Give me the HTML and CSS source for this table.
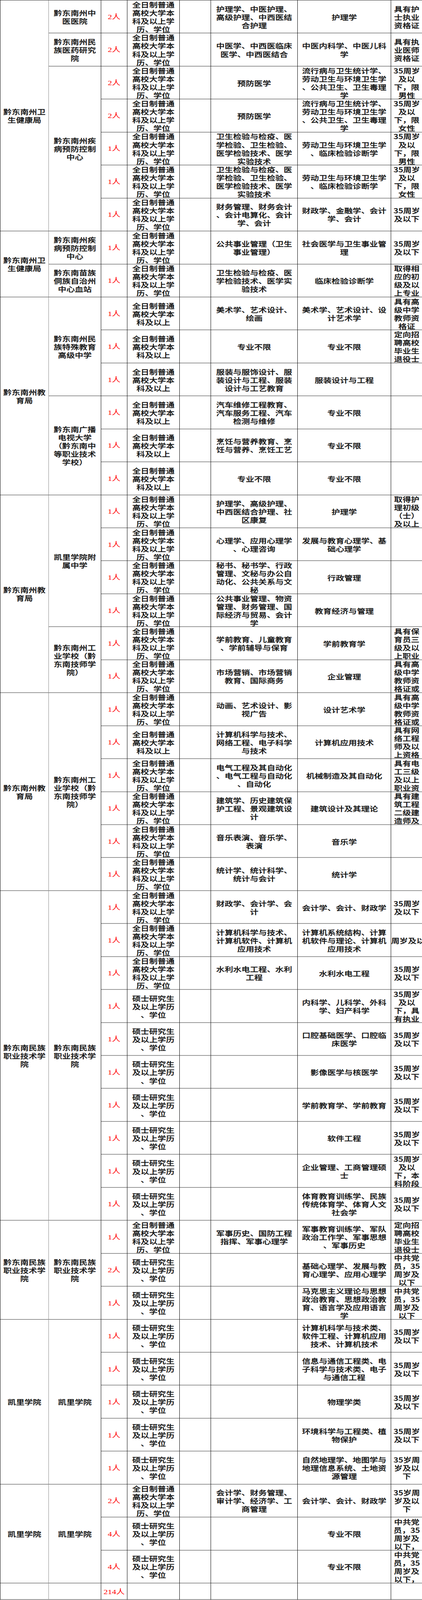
FILE: index.html
```html
<!DOCTYPE html>
<html lang="zh-CN">
<head>
<meta charset="utf-8">
<title>岗位表</title>
<link rel="stylesheet" href="styles.css">
</head>
<body>
<div class="page">
<div class="sheet">
<!-- rows 1-7 -->
<div class="c c1 s7">黔东南州卫<br>生健康局</div>
<div class="c">黔东南州中<br>医医院</div><div class="c n">2人</div><div class="c">全日制普通<br>高校大学本<br>科及以上学<br>历、学位</div><div class="c"></div><div class="c">护理学、中医护理、<br>高级护理、中西医结<br>合护理</div><div class="c">护理学</div><div class="c">具有护<br>士执业<br>资格证</div>
<div class="c">黔东南州民<br>族医药研究<br>院</div><div class="c n">2人</div><div class="c">全日制普通<br>高校大学本<br>科及以上学<br>历、学位</div><div class="c"></div><div class="c">中医学、中西医临床<br>医学、中西医结合</div><div class="c">中医内科学、中医儿科<br>学</div><div class="c">具有执<br>业医师<br>资格证</div>
<div class="c s5">黔东南州疾<br>病预防控制<br>中心</div><div class="c n">2人</div><div class="c">全日制普通<br>高校大学本<br>科及以上学<br>历、学位</div><div class="c"></div><div class="c">预防医学</div><div class="c">流行病与卫生统计学、<br>劳动卫生与环境卫生学<br>、公共卫生、卫生毒理<br>学</div><div class="c">35周岁<br>及以<br>下，限<br>男性</div>
<div class="c n">2人</div><div class="c">全日制普通<br>高校大学本<br>科及以上学<br>历、学位</div><div class="c"></div><div class="c">预防医学</div><div class="c">流行病与卫生统计学、<br>劳动卫生与环境卫生学<br>、公共卫生、卫生毒理<br>学</div><div class="c">35周岁<br>及以<br>下，限<br>女性</div>
<div class="c n">1人</div><div class="c">全日制普通<br>高校大学本<br>科及以上学<br>历、学位</div><div class="c"></div><div class="c">卫生检验与检疫、医<br>学检验、卫生检验、<br>医学检验技术、医学<br>实验技术</div><div class="c">劳动卫生与环境卫生学<br>、临床检验诊断学</div><div class="c">35周岁<br>及以<br>下，限<br>男性</div>
<div class="c n">1人</div><div class="c">全日制普通<br>高校大学本<br>科及以上学<br>历、学位</div><div class="c"></div><div class="c">卫生检验与检疫、医<br>学检验、卫生检验、<br>医学检验技术、医学<br>实验技术</div><div class="c">劳动卫生与环境卫生学<br>、临床检验诊断学</div><div class="c">35周岁<br>及以<br>下，限<br>女性</div>
<div class="c n">1人</div><div class="c">全日制普通<br>高校大学本<br>科及以上学<br>历、学位</div><div class="c"></div><div class="c">财务管理、财务会计<br>、会计电算化、会计<br>学、会计</div><div class="c">财政学、金融学、会计<br>学、会计</div><div class="c">35周岁<br>及以下</div>
<!-- rows 8-9 -->
<div class="c c1 s2">黔东南州卫<br>生健康局</div>
<div class="c">黔东南州疾<br>病预防控制<br>中心</div><div class="c n">1人</div><div class="c">全日制普通<br>高校大学本<br>科及以上学<br>历、学位</div><div class="c"></div><div class="c">公共事业管理（卫生<br>事业管理）</div><div class="c">社会医学与卫生事业管<br>理</div><div class="c">35周岁<br>及以下</div>
<div class="c">黔东南苗族<br>侗族自治州<br>中心血站</div><div class="c n">1人</div><div class="c">全日制普通<br>高校大学本<br>科及以上学<br>历、学位</div><div class="c"></div><div class="c">卫生检验与检疫、医<br>学检验技术、医学实<br>验技术</div><div class="c">临床检验诊断学</div><div class="c">取得相<br>应的初<br>级及以<br>上专业</div>
<!-- rows 10-15 -->
<div class="c c1 s6">黔东南州教<br>育局</div>
<div class="c s3">黔东南州民<br>族特殊教育<br>高级中学</div><div class="c n">1人</div><div class="c">全日制普通<br>高校大学本<br>科及以上</div><div class="c"></div><div class="c">美术学、艺术设计、<br>绘画</div><div class="c">美术学、艺术设计、设<br>计艺术学</div><div class="c">具有高<br>级中学<br>教师资<br>格证</div>
<div class="c n">1人</div><div class="c">全日制普通<br>高校大学本<br>科及以上</div><div class="c"></div><div class="c">专业不限</div><div class="c">专业不限</div><div class="c">定向招<br>聘高校<br>毕业生<br>退役士</div>
<div class="c n">1人</div><div class="c">全日制普通<br>高校大学本<br>科及以上</div><div class="c"></div><div class="c">服装与服饰设计、服<br>装设计与工程、服装<br>设计与工艺教育</div><div class="c">服装设计与工程</div><div class="c"></div>
<div class="c s3">黔东南广播<br>电视大学<br>（黔东南中<br>等职业技术<br>学校）</div><div class="c n">1人</div><div class="c">全日制普通<br>高校大学本<br>科及以上</div><div class="c"></div><div class="c">汽车维修工程教育、<br>汽车服务工程、汽车<br>检测与维修</div><div class="c">专业不限</div><div class="c"></div>
<div class="c n">1人</div><div class="c">全日制普通<br>高校大学本<br>科及以上</div><div class="c"></div><div class="c">烹饪与营养教育、烹<br>饪与营养、烹饪工艺</div><div class="c">专业不限</div><div class="c"></div>
<div class="c n">1人</div><div class="c">全日制普通<br>高校大学本<br>科及以上</div><div class="c"></div><div class="c">专业不限</div><div class="c">专业不限</div><div class="c"></div>
<!-- rows 16-21 -->
<div class="c c1 s6">黔东南州教<br>育局</div>
<div class="c s4">凯里学院附<br>属中学</div><div class="c n">1人</div><div class="c">全日制普通<br>高校大学本<br>科及以上学<br>历、学位</div><div class="c"></div><div class="c">护理学、高级护理、<br>中西医结合护理、社<br>区康复</div><div class="c">护理学</div><div class="c">取得护<br>理初级<br>（士）<br>及以上</div>
<div class="c n">1人</div><div class="c">全日制普通<br>高校大学本<br>科及以上学<br>历、学位</div><div class="c"></div><div class="c">心理学、应用心理学<br>、心理咨询</div><div class="c">发展与教育心理学、基<br>础心理学</div><div class="c"></div>
<div class="c n">1人</div><div class="c">全日制普通<br>高校大学本<br>科及以上学<br>历、学位</div><div class="c"></div><div class="c">秘书、秘书学、行政<br>管理、文秘与办公自<br>动化、公共关系与文<br>秘</div><div class="c">行政管理</div><div class="c"></div>
<div class="c n">1人</div><div class="c">全日制普通<br>高校大学本<br>科及以上学<br>历、学位</div><div class="c"></div><div class="c">公共事业管理、物资<br>管理、财务管理、国<br>际经济与贸易、会计<br>学</div><div class="c">教育经济与管理</div><div class="c"></div>
<div class="c s2">黔东南州工<br>业学校（黔<br>东南技师学<br>院）</div><div class="c n">1人</div><div class="c">全日制普通<br>高校大学本<br>科及以上学<br>历、学位</div><div class="c"></div><div class="c">学前教育、儿童教育<br>、学前辅导与保育</div><div class="c">学前教育学</div><div class="c">具有保<br>育员三<br>级及以<br>上职业</div>
<div class="c n">1人</div><div class="c">全日制普通<br>高校大学本<br>科及以上学<br>历、学位</div><div class="c"></div><div class="c">市场营销、市场营销<br>教育、国际商务</div><div class="c">企业管理</div><div class="c">具有高<br>级中学<br>教师资<br>格证或</div>
<!-- rows 22-27 -->
<div class="c c1 s6">黔东南州教<br>育局</div>
<div class="c s6">黔东南州工<br>业学校（黔<br>东南技师学<br>院）</div><div class="c n">1人</div><div class="c">全日制普通<br>高校大学本<br>科及以上学<br>历、学位</div><div class="c"></div><div class="c">动画、艺术设计、影<br>视广告</div><div class="c">设计艺术学</div><div class="c">具有高<br>级中学<br>教师资<br>格证或</div>
<div class="c n">1人</div><div class="c">全日制普通<br>高校大学本<br>科及以上</div><div class="c"></div><div class="c">计算机科学与技术、<br>网络工程、电子科学<br>与技术</div><div class="c">计算机应用技术</div><div class="c">具有网<br>络工程<br>师及以<br>上资格</div>
<div class="c n">1人</div><div class="c">全日制普通<br>高校大学本<br>科及以上学<br>历、学位</div><div class="c"></div><div class="c">电气工程及其自动化<br>、电气工程与自动化<br>、自动化</div><div class="c">机械制造及其自动化</div><div class="c">具有电<br>工三级<br>及以上<br>职业资</div>
<div class="c n">1人</div><div class="c">全日制普通<br>高校大学本<br>科及以上学<br>历、学位</div><div class="c"></div><div class="c">建筑学、历史建筑保<br>护工程、景观建筑设<br>计</div><div class="c">建筑设计及其理论</div><div class="c">具有建<br>筑工程<br>二级建<br>造师及</div>
<div class="c n">1人</div><div class="c">全日制普通<br>高校大学本<br>科及以上学<br>历、学位</div><div class="c"></div><div class="c">音乐表演、音乐学、<br>表演</div><div class="c">音乐学</div><div class="c"></div>
<div class="c n">1人</div><div class="c">全日制普通<br>高校大学本<br>科及以上学<br>历、学位</div><div class="c"></div><div class="c">统计学、统计科学、<br>统计与会计</div><div class="c">统计学</div><div class="c"></div>
<!-- rows 28-37 -->
<div class="c c1 s10">黔东南民族<br>职业技术学<br>院</div>
<div class="c s10">黔东南民族<br>职业技术学<br>院</div><div class="c n">1人</div><div class="c">全日制普通<br>高校大学本<br>科及以上学<br>历、学位</div><div class="c"></div><div class="c">财政学、会计学、会<br>计</div><div class="c">会计学、会计、财政学</div><div class="c">35周岁<br>及以下</div>
<div class="c n">1人</div><div class="c">全日制普通<br>高校大学本<br>科及以上学<br>历、学位</div><div class="c"></div><div class="c">计算机科学与技术、<br>计算机软件、计算机<br>应用技术</div><div class="c">计算机系统结构、计算<br>机软件与理论、计算机<br>应用技术</div><div class="c cl">周岁及以</div>
<div class="c n">1人</div><div class="c">全日制普通<br>高校大学本<br>科及以上学<br>历、学位</div><div class="c"></div><div class="c">水利水电工程、水利<br>工程</div><div class="c">水利水电工程</div><div class="c">35周岁<br>及以下</div>
<div class="c n">1人</div><div class="c">硕士研究生<br>及以上学历<br>、学位</div><div class="c"></div><div class="c"></div><div class="c">内科学、儿科学、外科<br>学、妇产科学</div><div class="c">35周岁<br>及以<br>下，具<br>有执业</div>
<div class="c n">1人</div><div class="c">硕士研究生<br>及以上学历<br>、学位</div><div class="c"></div><div class="c"></div><div class="c">口腔基础医学、口腔临<br>床医学</div><div class="c">35周岁<br>及以下</div>
<div class="c n">1人</div><div class="c">硕士研究生<br>及以上学历<br>、学位</div><div class="c"></div><div class="c"></div><div class="c">影像医学与核医学</div><div class="c">35周岁<br>及以下</div>
<div class="c n">1人</div><div class="c">硕士研究生<br>及以上学历<br>、学位</div><div class="c"></div><div class="c"></div><div class="c">学前教育学、学前教育</div><div class="c">35周岁<br>及以下</div>
<div class="c n">1人</div><div class="c">硕士研究生<br>及以上学历<br>、学位</div><div class="c"></div><div class="c"></div><div class="c">软件工程</div><div class="c">35周岁<br>及以下</div>
<div class="c n">1人</div><div class="c">硕士研究生<br>及以上学历<br>、学位</div><div class="c"></div><div class="c"></div><div class="c">企业管理、工商管理硕<br>士</div><div class="c">35周岁<br>及以<br>下，本<br>科阶段</div>
<div class="c n">1人</div><div class="c">硕士研究生<br>及以上学历<br>、学位</div><div class="c"></div><div class="c"></div><div class="c">体育教育训练学、民族<br>传统体育学、体育人文<br>社会学</div><div class="c">35周岁<br>及以下</div>
<!-- rows 38-40 -->
<div class="c c1 s3">黔东南民族<br>职业技术学<br>院</div>
<div class="c s3">黔东南民族<br>职业技术学<br>院</div><div class="c n">1人</div><div class="c">全日制普通<br>高校大学本<br>科及以上学<br>历、学位</div><div class="c"></div><div class="c">军事历史、国防工程<br>指挥、军事心理学</div><div class="c">军事教育训练学、军队<br>政治工作学、军事思想<br>、军事历史</div><div class="c">定向招<br>聘高校<br>毕业生<br>退役士</div>
<div class="c n">2人</div><div class="c">硕士研究生<br>及以上学历<br>、学位</div><div class="c"></div><div class="c"></div><div class="c">基础心理学、发展与教<br>育心理学、应用心理学</div><div class="c">中共党<br>员，35<br>周岁及<br>以下</div>
<div class="c n">1人</div><div class="c">硕士研究生<br>及以上学历<br>、学位</div><div class="c"></div><div class="c"></div><div class="c">马克思主义理论与思想<br>政治教育、思想政治教<br>育、语言学及应用语言<br>学</div><div class="c">中共党<br>员，35<br>周岁及<br>以下</div>
<!-- rows 41-45 -->
<div class="c c1 s5">凯里学院</div>
<div class="c s5">凯里学院</div><div class="c n">1人</div><div class="c">硕士研究生<br>及以上学历<br>、学位</div><div class="c"></div><div class="c"></div><div class="c">计算机科学与技术类、<br>软件工程、计算机应用<br>技术、计算机技术</div><div class="c">35周岁<br>及以下</div>
<div class="c n">1人</div><div class="c">硕士研究生<br>及以上学历<br>、学位</div><div class="c"></div><div class="c"></div><div class="c">信息与通信工程类、电<br>子科学与技术类、电子<br>与通信工程</div><div class="c">35周岁<br>及以下</div>
<div class="c n">1人</div><div class="c">硕士研究生<br>及以上学历<br>、学位</div><div class="c"></div><div class="c"></div><div class="c">物理学类</div><div class="c">35周岁<br>及以下</div>
<div class="c n">1人</div><div class="c">硕士研究生<br>及以上学历<br>、学位</div><div class="c"></div><div class="c"></div><div class="c">环境科学与工程类、植<br>物保护</div><div class="c">35周岁<br>及以下</div>
<div class="c n">1人</div><div class="c">硕士研究生<br>及以上学历<br>、学位</div><div class="c"></div><div class="c"></div><div class="c">自然地理学、地图学与<br>地理信息系统、土地资<br>源管理</div><div class="c">35岁周<br>岁及以<br>下</div>
<!-- rows 46-48 -->
<div class="c c1 s3">凯里学院</div>
<div class="c s3">凯里学院</div><div class="c n">2人</div><div class="c">全日制普通<br>高校大学本<br>科及以上学<br>历、学位</div><div class="c"></div><div class="c">会计学、财务管理、<br>审计学、经济学、工<br>商管理</div><div class="c">会计学、会计、财政学</div><div class="c">35岁周<br>岁及以<br>下</div>
<div class="c n">4人</div><div class="c">硕士研究生<br>及以上学历<br>、学位</div><div class="c"></div><div class="c"></div><div class="c">专业不限</div><div class="c">中共党<br>员，35<br>周岁及<br>以下，</div>
<div class="c n">4人</div><div class="c">硕士研究生<br>及以上学历<br>、学位</div><div class="c"></div><div class="c"></div><div class="c">专业不限</div><div class="c">中共党<br>员，35<br>周岁及<br>以下，</div>
<!-- total -->
<div class="c c1"></div><div class="c"></div><div class="c n">214人</div><div class="c"></div><div class="c"></div><div class="c"></div><div class="c"></div><div class="c"></div>
</div>
</div>
<script src="app.js"></script>
</body>
</html>
```

FILE: styles.css
```css
:root {
  --fit: 1;
}

html, body {
  margin: 0;
  padding: 0;
  background: #ffffff;
}

body {
  font-family: "Noto Sans CJK SC", "Noto Sans", sans-serif;
  color: #111111;
}

/* The sheet is designed for a 5067px tall frame; --fit shrinks it
   vertically when the actual window is shorter. */
.page {
  width: 1080px;
  height: calc(5067px * var(--fit));
  overflow: hidden;
}

.sheet {
  display: grid;
  grid-template-columns: 124px 134px 67px 134px 80px 222px 239px 81px;
  grid-template-rows: repeat(48, 104.45px) 52px;
  width: 1081px;
  border-top: 1px solid #000;
  border-left: 1px solid #000;
  transform-origin: 0 0;
  transform: scaleY(var(--fit));
}

.c {
  box-sizing: border-box;
  min-width: 0;
  min-height: 0;
  padding-top: 2px;
  border-right: 1px solid #000;
  border-bottom: 1px solid #000;
  display: flex;
  align-items: center;
  justify-content: center;
  text-align: center;
  white-space: nowrap;
  font-size: 21.6px;
  line-height: 26px;
  font-weight: 500;
  -webkit-text-stroke: 0.35px #111111;
}

.c1 {
  border-right-color: #8a8a8a;
}

.n {
  font-family: "Liberation Serif", "Noto Sans CJK SC", serif;
  font-weight: 400;
  color: #ff0000;
  -webkit-text-stroke: 0;
}

.cl {
  justify-content: flex-start;
  overflow: hidden;
}

.s2 { grid-row: span 2; }
.s3 { grid-row: span 3; }
.s4 { grid-row: span 4; }
.s5 { grid-row: span 5; }
.s6 { grid-row: span 6; }
.s7 { grid-row: span 7; }
.s10 { grid-row: span 10; }
```

FILE: app.js
```js
(function () {
  var designHeight = 5067;
  var h = window.innerHeight || designHeight;
  var fit = Math.min(1, h / designHeight);
  document.documentElement.style.setProperty('--fit', String(fit));
})();
```
